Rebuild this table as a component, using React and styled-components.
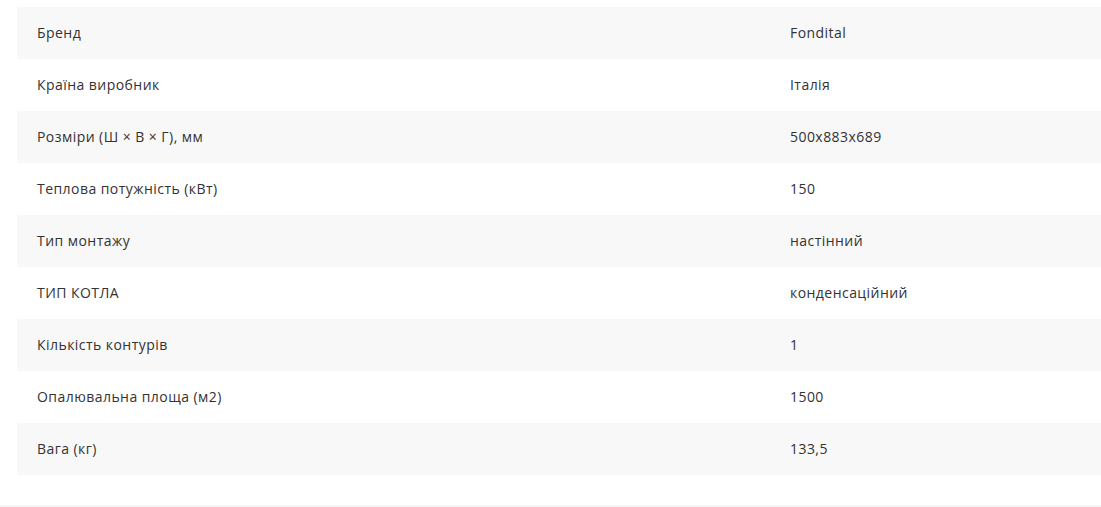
import React from "react";
import styled, { createGlobalStyle } from "styled-components";

const Global = createGlobalStyle`
  html, body { margin: 0; padding: 0; background: #fff; }
  body { font-family: "Open Sans", "Liberation Sans", sans-serif; }
`;

const Page = styled.div`
  padding: 7px 0 0 17px;
`;

const Table = styled.div`
  display: flex;
  flex-direction: column;
`;

const Row = styled.div`
  display: grid;
  grid-template-columns: 753px 1fr;
  height: 52px;
  align-items: center;
  background: ${(p) => (p.$shaded ? "#f8f8f8" : "#fff")};
`;

const Cell = styled.div`
  padding-left: 20px;
  font-size: 14px;
  letter-spacing: 0.45px;
  color: #333;
  line-height: 20px;
`;

const Footer = styled.div`
  margin-top: 30px;
  margin-left: -17px;
  height: 2px;
  background: #f6f6f6;
`;

const rows = [
  ["Бренд", "Fondital"],
  ["Країна виробник", "Італія"],
  ["Розміри (Ш × В × Г), мм", "500x883x689"],
  ["Теплова потужність (кВт)", "150"],
  ["Тип монтажу", "настінний"],
  ["ТИП КОТЛА", "конденсаційний"],
  ["Кількість контурів", "1"],
  ["Опалювальна площа (м2)", "1500"],
  ["Вага (кг)", "133,5"],
];

export default function App() {
  return (
    <Page>
      <Global />
      <Table>
        {rows.map(([k, v], i) => (
          <Row key={k} $shaded={i % 2 === 0}>
            <Cell>{k}</Cell>
            <Cell>{v}</Cell>
          </Row>
        ))}
      </Table>
      <Footer />
    </Page>
  );
}
